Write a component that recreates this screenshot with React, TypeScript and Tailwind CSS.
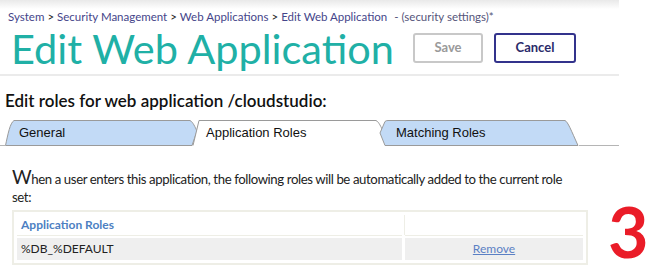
import React from "react";

const crumbs = ["System", "Security Management", "Web Applications", "Edit Web Application"];

function Tab({
  label,
  width,
  offset,
  path,
  fill,
  textPad,
}: {
  label: string;
  width: number;
  offset: string;
  path: string;
  fill: string;
  textPad: string;
}) {
  return (
    <div className={`relative h-[26px] shrink-0 ${offset}`} style={{ width }}>
      <svg className="absolute inset-0" width={width} height={26} viewBox={`0 0 ${width} 26`}>
        <path d={path} fill={fill} stroke="#9a9a9a" strokeWidth="1" />
      </svg>
      <span
        className={`relative flex h-full items-center ${textPad} text-[13px] text-[#111]`}
        style={{ fontFamily: '"Liberation Sans", Arial, sans-serif' }}
      >
        {label}
      </span>
    </div>
  );
}

export default function App() {
  return (
    <div className="h-[274px] w-[655px] overflow-hidden bg-white" style={{ fontFamily: 'Lato, "Noto Sans", sans-serif' }}>
      <div className="w-[619px]">
        <div className="h-[9px] bg-gradient-to-b from-[#e9e9e9] to-white" />
        <div className="flex items-center whitespace-nowrap px-2 text-[11.5px] leading-[16px] text-[#45458a]">
          {crumbs.map((c, i) => (
            <React.Fragment key={c}>
              {i > 0 && <span className="px-[3px] text-[#222]">&gt;</span>}
              <span>{c}</span>
            </React.Fragment>
          ))}
          <span className="ml-[7px] text-[#55557a]">- (security settings)*</span>
        </div>
        <div className="flex h-[46px] items-center pl-[11px]">
          <h1 className="whitespace-nowrap text-[41.5px] leading-[46px] text-[#20b0a6]">Edit Web Application</h1>
          <button className="ml-[19px] h-[30px] w-[70px] rounded-[3px] border-2 border-[#c8c8c8] text-[13px] font-bold text-[#9a9a9a]">
            Save
          </button>
          <button className="ml-[11px] h-[30px] w-[82px] rounded-[3px] border-2 border-[#33338c] text-[13px] font-bold text-[#2b2b6a]">
            Cancel
          </button>
        </div>
        <div className="mt-[3px] h-[2px] bg-[#ebebeb]" />

        <h2 className="mt-[14px] pl-[5px] text-[17px] font-semibold leading-[22px] text-[#111]">
          Edit roles for web application /cloudstudio:
        </h2>

        <div className="mt-[8px] flex items-end">
          <div className="h-[1px] w-[5px] shrink-0 bg-[#b5b5b5]" />
          <Tab
            label="General"
            width={193}
            offset=""
            fill="#c2daf6"
            textPad="pl-[14px]"
            path="M0.5,25.5 C3,14 5,3 9,0.5 L185,0.5 C188,2 190,7 192,11 L187,25.5 Z"
          />
          <Tab
            label="Application Roles"
            width={192}
            offset="-ml-[6px]"
            fill="#ffffff"
            textPad="pl-[14px]"
            path="M1,25.5 L7,0.5 L184,0.5 C187,2 189,7 191,11"
          />
          <Tab
            label="Matching Roles"
            width={200}
            offset="-ml-[5px]"
            fill="#c2daf6"
            textPad="pl-[17px]"
            path="M6,25.5 L1,13 L6,1.5 Q7,0.5 9,0.5 L186,0.5 C189,2 192,10 199,25.5 Z"
          />
          <div className="h-[1px] flex-1 bg-[#b5b5b5]" />
        </div>

        <p className="mt-[21px] w-[578px] pl-[12px] text-[13.2px] leading-[18px] tracking-[-0.4px] text-[#222]">
          <span className="text-[19px] leading-none">W</span>hen a user enters this application, the following roles will
          be automatically added to the current role set:
        </p>
      </div>

      <div className="mt-[4px] flex items-start">
        <table className="ml-[12px] w-[576px] border-separate border-spacing-[3px] border-2 border-[#eeeee6] text-[12px]">
          <tbody>
            <tr>
              <td className="h-[20px] w-[385px] px-[4px] font-bold text-[#4d7fc2] shadow-[0_1px_0_#eeeee6]">
                Application Roles
              </td>
              <td className="h-[20px] shadow-[0_1px_0_#eeeee6,-1px_0_0_#eeeee6]" />
            </tr>
            <tr>
              <td className="h-[22px] bg-[#efefef] px-[4px] text-[#222]">%DB_%DEFAULT</td>
              <td className="h-[22px] bg-[#efefef] text-center">
                <a className="text-[#5b80c4] underline">Remove</a>
              </td>
            </tr>
          </tbody>
        </table>
        <div className="-mt-[14px] ml-[20px] text-[70px] font-bold leading-[70px] text-[#ea1c28]">3</div>
      </div>
    </div>
  );
}
